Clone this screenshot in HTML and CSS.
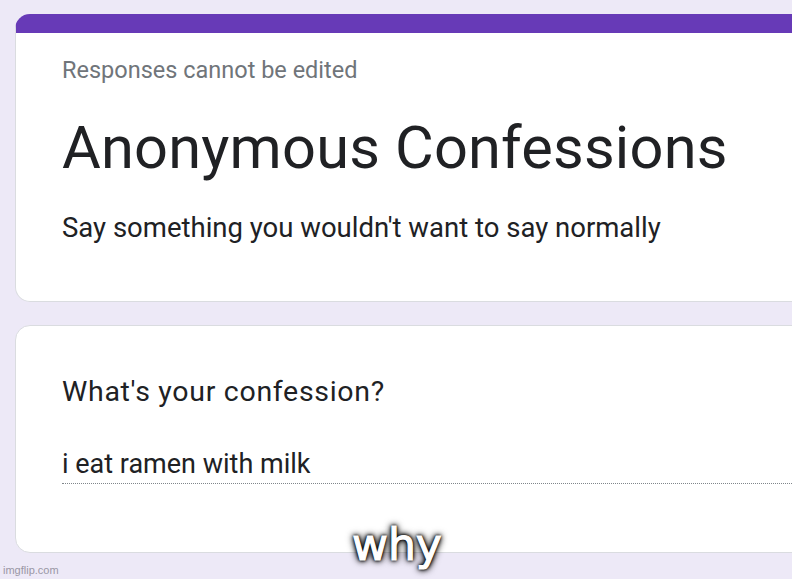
FILE: index.html
```html
<!DOCTYPE html>
<html lang="en">
<head>
<meta charset="UTF-8">
<meta name="viewport" content="width=device-width, initial-scale=1.0">
<title>Anonymous Confessions</title>
<link rel="stylesheet" href="styles.css">
</head>
<body>
    <div class="page">
        <div class="card headCard">
            <div class="note">Responses cannot be edited</div>
            <h1 class="title">Anonymous Confessions</h1>
            <div class="desc">Say something you wouldn't want to say normally</div>
        </div>
        <div class="card questionCard">
            <div class="question">What's your confession?</div>
            <div class="answer">i eat ramen with milk</div>
        </div>
    </div>
    <div class="caption">why</div>
    <div class="watermark">imgflip.com</div>
</body>
</html>
```

FILE: styles.css
```css
  html, body {
    margin: 0;
    height: 100%;
  }
  body {
    font-family: Roboto, Arial, sans-serif;
    background-color: #ede9f7;
    overflow: hidden;
    position: relative;
  }
  .page {
    padding: 14px 0 0 15px;
    display: flex;
    flex-direction: column;
    gap: 23px;
  }
  .card {
    width: 820px;
    background-color: #fff;
    border: 1px solid #dadce0;
    border-radius: 15px;
    box-sizing: border-box;
    padding-left: 46px;
  }
  .headCard {
    height: 288px;
    border-top: 19px solid #673ab7;
    padding-top: 23px;
  }
  .note {
    font-size: 23.5px;
    color: #70757a;
    line-height: 28px;
  }
  .title {
    margin: 29px 0 0 0;
    font-size: 59.5px;
    font-weight: 400;
    color: #202124;
    line-height: 70px;
    letter-spacing: 0.2px;
  }
  .desc {
    margin-top: 29px;
    font-size: 27.5px;
    color: #202124;
    line-height: 32px;
  }
  .questionCard {
    height: 228px;
    padding-top: 50px;
  }
  .question {
    font-size: 28.5px;
    color: #202124;
    line-height: 32px;
    letter-spacing: 0.7px;
  }
  .answer {
    margin-top: 40px;
    font-size: 27px;
    color: #202124;
    line-height: 32px;
    padding-bottom: 3px;
    border-bottom: 1px dotted #80868b;
  }
  .caption {
    position: absolute;
    left: 352px;
    top: 519px;
    font-family: "DejaVu Sans", sans-serif;
    font-size: 44px;
    line-height: 1.164;
    color: #fff;
    -webkit-text-stroke: 1.2px #fff;
    text-shadow: 0 0 2px #000, 0 0 3px #000, 0 0 4px #000, 0 0 6px #000, 0 0 8px #000;
  }
  .watermark {
    position: absolute;
    left: 3px;
    bottom: 3px;
    font-family: Arial, "Liberation Sans", sans-serif;
    font-size: 11px;
    color: #9a97a5;
  }
```
